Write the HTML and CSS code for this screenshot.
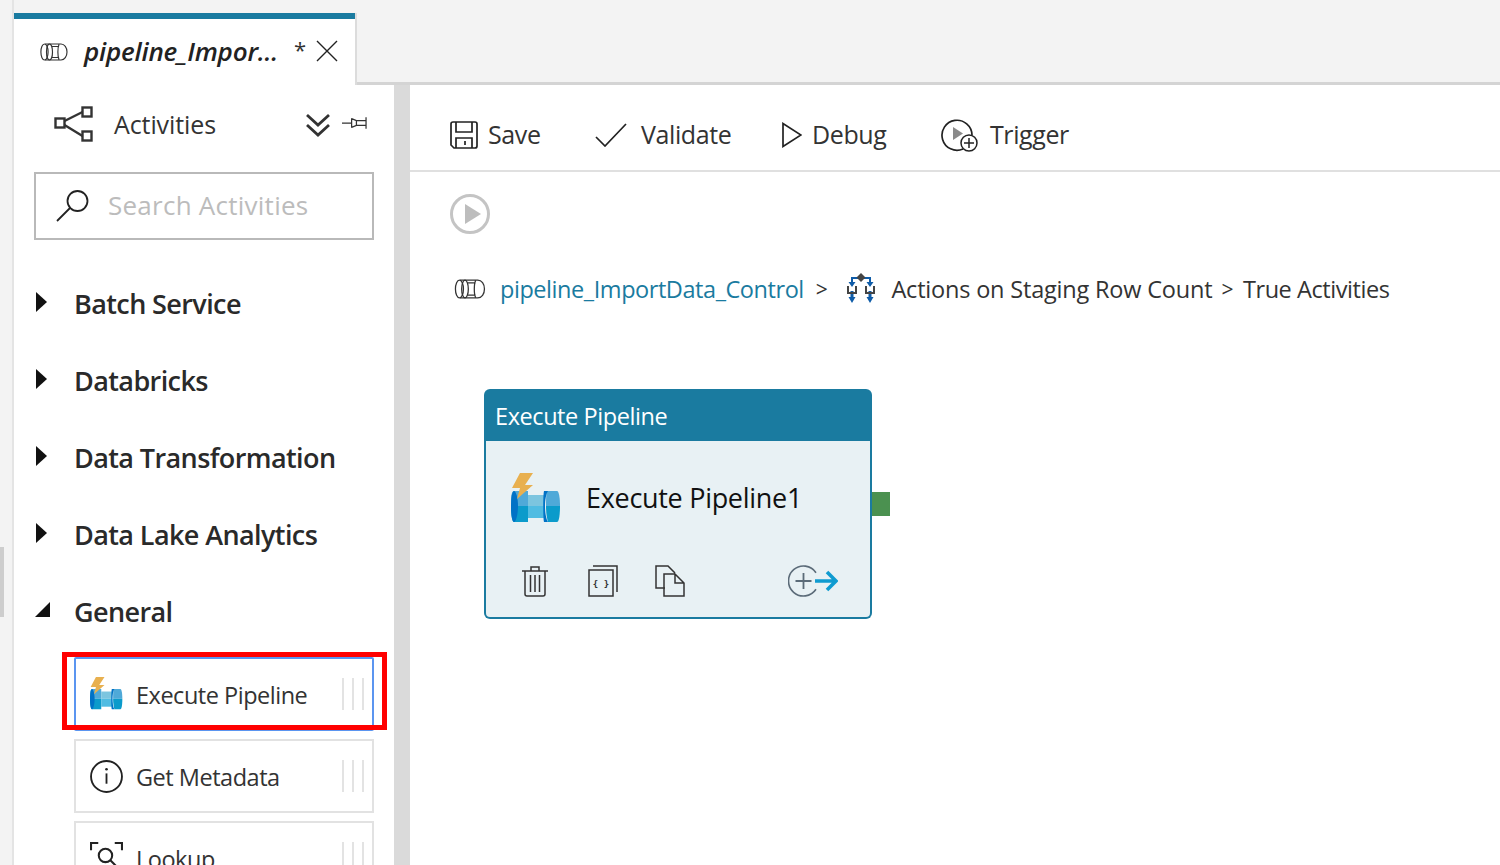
FILE: index.html
```html
<!DOCTYPE html>
<html lang="en">
<head>
<meta charset="utf-8">
<title>pipeline_ImportData_Control</title>
<link rel="stylesheet" href="styles.css">
</head>
<body>
<svg class="defs" width="0" height="0" aria-hidden="true">
  <symbol id="pipe-outline" viewBox="0 0 28 18">
    <g fill="none" stroke="#333" stroke-width="1.150">
      <ellipse cx="4.500" cy="9" rx="3.600" ry="8"/>
      <ellipse cx="9.500" cy="9" rx="3" ry="8"/>
      <path d="M5 1h16c3.500 0 6 3.500 6 8s-2.500 8-6 8H5M12 3.500h7M12 14.500h7M19 1.500c-1.500 3-1.500 12 0 15"/>
    </g>
  </symbol>
  <symbol id="exec" viewBox="0 0 50 50">
    <path fill="#4fa9d8" d="M3 18h14v15H0v-6c0-5 1-9 3-9z"/>
    <path fill="#0b9bcb" d="M0 33h17v16H3c-2 0-3-7-3-16z"/>
    <path fill="#0072c6" d="M3 18c2 0 4 7 4 15s-2 16-4 16-3-8-3-16 1-15 3-15z"/>
    <path fill="#7cc5df" d="M17 22h17v11H17z"/>
    <path fill="#50bce2" d="M17 33h17v12H17z"/>
    <path fill="#4fa9d8" d="M36 18h10c2 0 3 7 3 15H35c0-6 0-11 1-15z"/>
    <path fill="#0b9bcb" d="M35 33h14c0 9-1 16-3 16H37c-1-3-2-9-2-16z"/>
    <path fill="#0072c6" d="M33 18h4c-2 3-3 9-3 15s1 13 3 16h-4c-1-4-1-27 0-31z"/>
    <path fill="#e8b04f" d="M9 0h13l-8 12h8L6 26l3-11H1z"/>
  </symbol>
  <symbol id="switch" viewBox="0 0 28 32">
    <path fill="none" stroke="#0f5ca8" stroke-width="2" d="M11 5H5v6M17 5h6v6"/>
    <path fill="#0f5ca8" d="M1.500 9h7L5 14zM19.500 9h7L23 14zM3.500 24h3v-6h-3v6zM21.500 24h3v-6h-3v6z"/>
    <path fill="#0f5ca8" d="M1.500 24h7L5 30zM19.500 24h7L23 30z"/>
    <path fill="#444" d="M14 0l4.500 4.500L14 9 9.500 4.500z"/>
    <path fill="none" stroke="#444" stroke-width="2" d="M1 13v7h8v-7M19 13v7h8v-7"/>
  </symbol>
</svg>

<div class="app">
  <div class="rail"><span class="rail-thumb"></span></div>
  <div class="shell">
    <header class="tabstrip">
      <div class="tab">
        <svg class="tab-icon"><use href="#pipe-outline"/></svg>
        <span class="tab-title">pipeline_Impor...</span>
        <span class="tab-dirty">*</span>
        <svg class="tab-close" viewBox="0 0 22 22"><path d="M1 1l20 20M21 1L1 21" stroke="#222" stroke-width="1.400" fill="none"/></svg>
      </div>
    </header>

    <div class="workspace">
      <aside class="sidebar">
        <div class="side-head">
          <svg class="activities-icon" viewBox="0 0 40 36"><g fill="none" stroke="#333" stroke-width="2.400"><rect x="1.500" y="12.500" width="9" height="9"/><rect x="28.500" y="1.500" width="9" height="9"/><rect x="28.500" y="25.500" width="9" height="9"/><path d="M10.500 15l18-9M10.500 19l18 11"/></g></svg>
          <span class="side-title">Activities</span>
          <svg class="collapse" viewBox="0 0 26 24"><path d="M2 2l11 10L24 2M2 12l11 10 11-10" fill="none" stroke="#333" stroke-width="2.800"/></svg>
          <svg class="pin" viewBox="0 0 26 14"><path d="M0 7h10M10 2.500l5 2h10M25 1v12M10 11.500l5-2h10M10 2v10M15 4.500v5" fill="none" stroke="#333" stroke-width="1.300"/></svg>
        </div>
        <div class="search">
          <svg class="search-icon" viewBox="0 0 34 34"><circle cx="21.500" cy="12" r="10" fill="none" stroke="#222" stroke-width="1.800"/><path d="M14 19L1 32" stroke="#222" stroke-width="1.800"/></svg>
          <span class="search-text">Search Activities</span>
        </div>
        <ul class="cats">
          <li class="cat"><span class="arrow"></span>Batch Service</li>
          <li class="cat"><span class="arrow"></span>Databricks</li>
          <li class="cat"><span class="arrow"></span>Data Transformation</li>
          <li class="cat"><span class="arrow"></span>Data Lake Analytics</li>
          <li class="cat"><span class="arrow-open"></span>General</li>
        </ul>
        <div class="items">
          <div class="item selected">
            <svg class="item-icon"><use href="#exec"/></svg>
            <span class="item-label">Execute Pipeline</span>
            <span class="grip"><i></i><i></i><i></i></span>
            <span class="redbox"></span>
          </div>
          <div class="item">
            <svg class="item-icon" viewBox="0 0 32 32"><circle cx="16" cy="16" r="15" fill="none" stroke="#222" stroke-width="1.800"/><path d="M16 13v10" stroke="#222" stroke-width="1.800"/><circle cx="16" cy="9" r="1.300" fill="#222"/></svg>
            <span class="item-label">Get Metadata</span>
            <span class="grip"><i></i><i></i><i></i></span>
          </div>
          <div class="item">
            <svg class="item-icon" viewBox="0 0 32 32"><path d="M1 8V1h7M24 1h7v7" fill="none" stroke="#222" stroke-width="2"/><circle cx="15" cy="13" r="6.500" fill="none" stroke="#222" stroke-width="2"/><path d="M20 18l7 7" stroke="#222" stroke-width="2"/></svg>
            <span class="item-label">Lookup</span>
            <span class="grip"><i></i><i></i><i></i></span>
          </div>
        </div>
      </aside>

      <main class="main">
        <nav class="toolbar">
          <div class="tool tool-save">
            <svg class="ico-save" viewBox="0 0 28 28"><path d="M1 3q0-2 2-2h22q2 0 2 2v22q0 2-2 2H4l-3-3z M6 1v10h16V1 M6 27V17h16v10 M15 20v4" fill="none" stroke="#222" stroke-width="1.700"/></svg>
            <span>Save</span>
          </div>
          <div class="tool tool-validate">
            <svg class="ico-check" viewBox="0 0 32 24"><path d="M1 14l9 9L31 1" fill="none" stroke="#222" stroke-width="1.700"/></svg>
            <span>Validate</span>
          </div>
          <div class="tool tool-debug">
            <svg class="ico-debug" viewBox="0 0 20 26"><path d="M1 1.500v23L19 13z" fill="none" stroke="#222" stroke-width="1.700"/></svg>
            <span>Debug</span>
          </div>
          <div class="tool">
            <svg class="ico-trigger" viewBox="0 0 37 34"><path d="M22 31A15 15 0 1 1 31 17" fill="none" stroke="#222" stroke-width="1.700"/><path d="M12 9v13l10-6.500z" fill="#8a8a8a"/><circle cx="28" cy="25" r="8" fill="#fff" stroke="#222" stroke-width="1.500"/><path d="M28 20v10M23 25h10" stroke="#222" stroke-width="1.500"/></svg>
            <span>Trigger</span>
          </div>
        </nav>

        <section class="canvas">
          <svg class="run" viewBox="0 0 40 40"><circle cx="20" cy="20" r="18.500" fill="none" stroke="#c4c4c4" stroke-width="3"/><path d="M15 10v20l16-10z" fill="#bdbdbd"/></svg>
          <div class="crumbs">
            <svg class="crumb-pipe"><use href="#pipe-outline"/></svg>
            <a class="crumb-link">pipeline_ImportData_Control</a>
            <span class="crumb-sep">&gt;</span>
            <svg class="crumb-switch"><use href="#switch"/></svg>
            <span class="crumb-text crumb-actions">Actions on Staging Row Count</span>
            <span class="crumb-sep sep2">&gt;</span>
            <span class="crumb-text">True Activities</span>
          </div>

          <div class="node">
            <div class="node-head">Execute Pipeline</div>
            <div class="node-body">
              <div class="node-main">
                <svg class="node-icon"><use href="#exec"/></svg>
                <span class="node-name">Execute Pipeline1</span>
              </div>
              <div class="node-actions">
                <svg class="act-trash" viewBox="0 0 26 32"><path d="M0 6h26M9 6V2h8v4M3 6v23q0 2 2 2h16q2 0 2-2V6M8.500 10v17M13 10v17M17.500 10v17" fill="none" stroke="#333" stroke-width="1.500"/></svg>
                <svg class="act-code" viewBox="0 0 30 32"><path d="M5 1h24v26M1 5h24v26H1z" fill="none" stroke="#333" stroke-width="1.500"/><text x="13" y="22" class="brace">{ }</text></svg>
                <svg class="act-copy" viewBox="0 0 30 32"><path d="M10 23H1V1h12l7 7M9 9h11l9 9v13H9zM20 9v9h9" fill="none" stroke="#333" stroke-width="1.500"/></svg>
                <svg class="act-add" viewBox="0 0 50 32"><path d="M28 7.700A15 15 0 1 0 28 24.300" fill="none" stroke="#5b6b78" stroke-width="1.600"/><path d="M15.500 8v16M7.500 16h16" stroke="#5b6b78" stroke-width="1.800"/><path d="M27 16h20M39 7l9 9-9 9" fill="none" stroke="#0f9bd0" stroke-width="3.600"/></svg>
              </div>
            </div>
            <span class="port"></span>
          </div>
        </section>
      </main>
    </div>
  </div>
</div>
</body>
</html>
```

FILE: styles.css
```css
* { box-sizing: border-box; }
html, body { margin: 0; padding: 0; height: 865px; overflow: hidden; }
body { font-family: "Open Sans", "Noto Sans", sans-serif; color: #333; background: #fff; }
.defs { position: absolute; }

.app { display: flex; height: 865px; overflow: hidden; background: #f3f3f3; }
.rail { width: 14px; position: relative; background: #f3f3f3; border-right: 2px solid #e4e4e4; flex: none; }
.rail-thumb { position: absolute; left: 0; top: 547px; width: 4px; height: 70px; background: #cdcdcd; }
.shell { flex: 1; display: flex; flex-direction: column; min-width: 0; }

.tabstrip { height: 85px; flex: none; padding-top: 13px; background: #f3f3f3; border-bottom: 3px solid #d4d4d4; }
.tab { width: 341px; height: 72px; background: #fff; border-top: 6px solid #1a7ba0; box-shadow: 2px 0 0 #dcdcdc; display: flex; align-items: center; padding: 0 0 2px 26px; }
.tab-icon { width: 28px; height: 18px; flex: none; margin-top: 1px; }
.tab-title { margin-left: 16px; width: 210px; font-size: 26px; font-style: italic; font-weight: 600; color: #222; letter-spacing: -0.2px; white-space: nowrap; }
.tab-dirty { font-size: 22px; color: #333; margin-top: -4px; }
.tab-close { width: 22px; height: 22px; margin-left: 10px; flex: none; }

.workspace { flex: 1; display: flex; min-height: 0; }
.sidebar { width: 396px; flex: none; background: #fff; border-right: 16px solid #dadada; overflow: hidden; padding: 0 20px; }
.side-head { height: 87px; display: flex; align-items: center; padding: 0 0 7px 20px; }
.activities-icon { width: 40px; height: 36px; flex: none; margin-top: -2px; }
.side-title { margin-left: 20px; font-size: 25px; letter-spacing: -0.1px; color: #333; margin-top: -2px; }
.collapse { width: 26px; height: 24px; margin-left: auto; flex: none; transform: translateX(1px); }
.pin { width: 25px; height: 14px; margin: 0 7px 4px 12px; flex: none; }

.search { width: 340px; height: 68px; border: 2px solid #b9b9b9; display: flex; align-items: center; padding-left: 20px; }
.search-icon { width: 34px; height: 34px; flex: none; }
.search-text { margin: -2px 0 0 18px; font-size: 26px; letter-spacing: 0.25px; color: #bcbcbc; }

.cats { list-style: none; margin: 25px 0 0; padding: 0; }
.cat { height: 77px; display: flex; align-items: center; font-size: 27px; font-weight: 600; letter-spacing: -0.6px; color: #2a2a2a; }
.arrow { width: 0; height: 0; margin: -4px 27px 0 2px; border-left: 11px solid #111; border-top: 10.500px solid transparent; border-bottom: 10.500px solid transparent; }
.arrow-open { width: 0; height: 0; margin: -4px 24px 0 1px; border-left: 15px solid transparent; border-bottom: 15px solid #111; }

.items { margin: 0 0 0 40px; display: flex; flex-direction: column; gap: 8px; padding-top: 7px; }
.item { position: relative; width: 300px; height: 74px; flex: none; border: 2px solid #e2e2e2; display: flex; align-items: center; padding-left: 14px; }
.item.selected { border: 2px solid #5b95f0; border-bottom-width: 3px; border-radius: 2px; }
.item-icon { width: 33px; height: 33px; flex: none; }
.item-label { margin: 2px 0 0 13px; font-size: 23.500px; letter-spacing: -0.48px; color: #333; white-space: nowrap; }
.selected .item-label { margin-top: 3px; }
.grip { margin-left: auto; margin-right: 8px; display: flex; gap: 8px; }
.grip i { width: 2px; height: 32px; background: #e3e3e3; display: block; }
.redbox { position: absolute; left: -14px; top: -7px; width: 325px; height: 78px; border: 5px solid #f00; pointer-events: none; }

.main { flex: 1; min-width: 0; background: #fff; display: flex; flex-direction: column; }
.toolbar { height: 87px; flex: none; display: flex; align-items: center; padding: 14px 0 0 40px; border-bottom: 2px solid #e0e0e0; font-size: 25px; letter-spacing: -0.4px; color: #333; }
.tool { display: flex; align-items: center; }
.tool span { margin-top: -2px; }
.tool-save { width: 145px; gap: 10px; }
.tool-validate { width: 187px; gap: 14px; }
.tool-debug { width: 159px; gap: 10px; }
.ico-save { width: 28px; height: 28px; flex: none; }
.ico-check { width: 32px; height: 24px; flex: none; }
.ico-debug { width: 20px; height: 26px; flex: none; }
.ico-trigger { width: 37px; height: 34px; margin-right: 12px; flex: none; }

.canvas { flex: 1; position: relative; padding: 22px 0 0 40px; }
.run { width: 40px; height: 40px; display: block; }
.crumbs { display: flex; align-items: center; margin: 37px 0 0 4px; height: 36px; font-size: 23.500px; letter-spacing: -0.44px; color: #333; white-space: nowrap; }
.crumb-pipe { width: 32px; height: 20px; flex: none; }
.crumb-link { margin-left: 14px; color: #1a7ba0; }
.crumb-sep { margin-left: 12px; font-size: 21px; }
.crumb-switch { width: 28px; height: 32px; margin: 0 16px 0 20px; flex: none; }
.crumb-actions { letter-spacing: -0.19px; }
.sep2 { margin: 0 10px 0 9px; }

.node { position: absolute; left: 74px; top: 217px; width: 388px; height: 230px; }
.node-head { height: 52px; background: #1a7ba0; border-radius: 6px 6px 0 0; color: #fff; font-size: 23.500px; letter-spacing: -0.42px; line-height: 54px; padding-left: 11px; }
.node-body { height: 178px; background: #e8f1f4; border: 2px solid #1a7ba0; border-top: 0; border-radius: 0 0 6px 6px; display: flex; flex-direction: column; }
.node-main { display: flex; align-items: center; padding: 32px 0 0 25px; }
.node-icon { width: 50px; height: 50px; flex: none; }
.node-name { margin: -2px 0 0 25px; font-size: 27px; letter-spacing: -0.3px; color: #111; }
.node-actions { position: relative; display: flex; align-items: center; margin-top: 42px; padding-left: 36px; }
.act-trash { width: 26px; height: 32px; flex: none; }
.act-code { width: 30px; height: 32px; margin-left: 40px; flex: none; }
.act-copy { width: 30px; height: 32px; margin-left: 37px; flex: none; }
.act-add { width: 50px; height: 32px; margin-left: 103px; flex: none; }
.brace { font-family: "DejaVu Sans Mono", monospace; font-size: 9px; font-weight: 700; fill: #333; text-anchor: middle; }
.port { position: absolute; left: 388px; top: 103px; width: 18px; height: 24px; background: #4b9150; }
```
